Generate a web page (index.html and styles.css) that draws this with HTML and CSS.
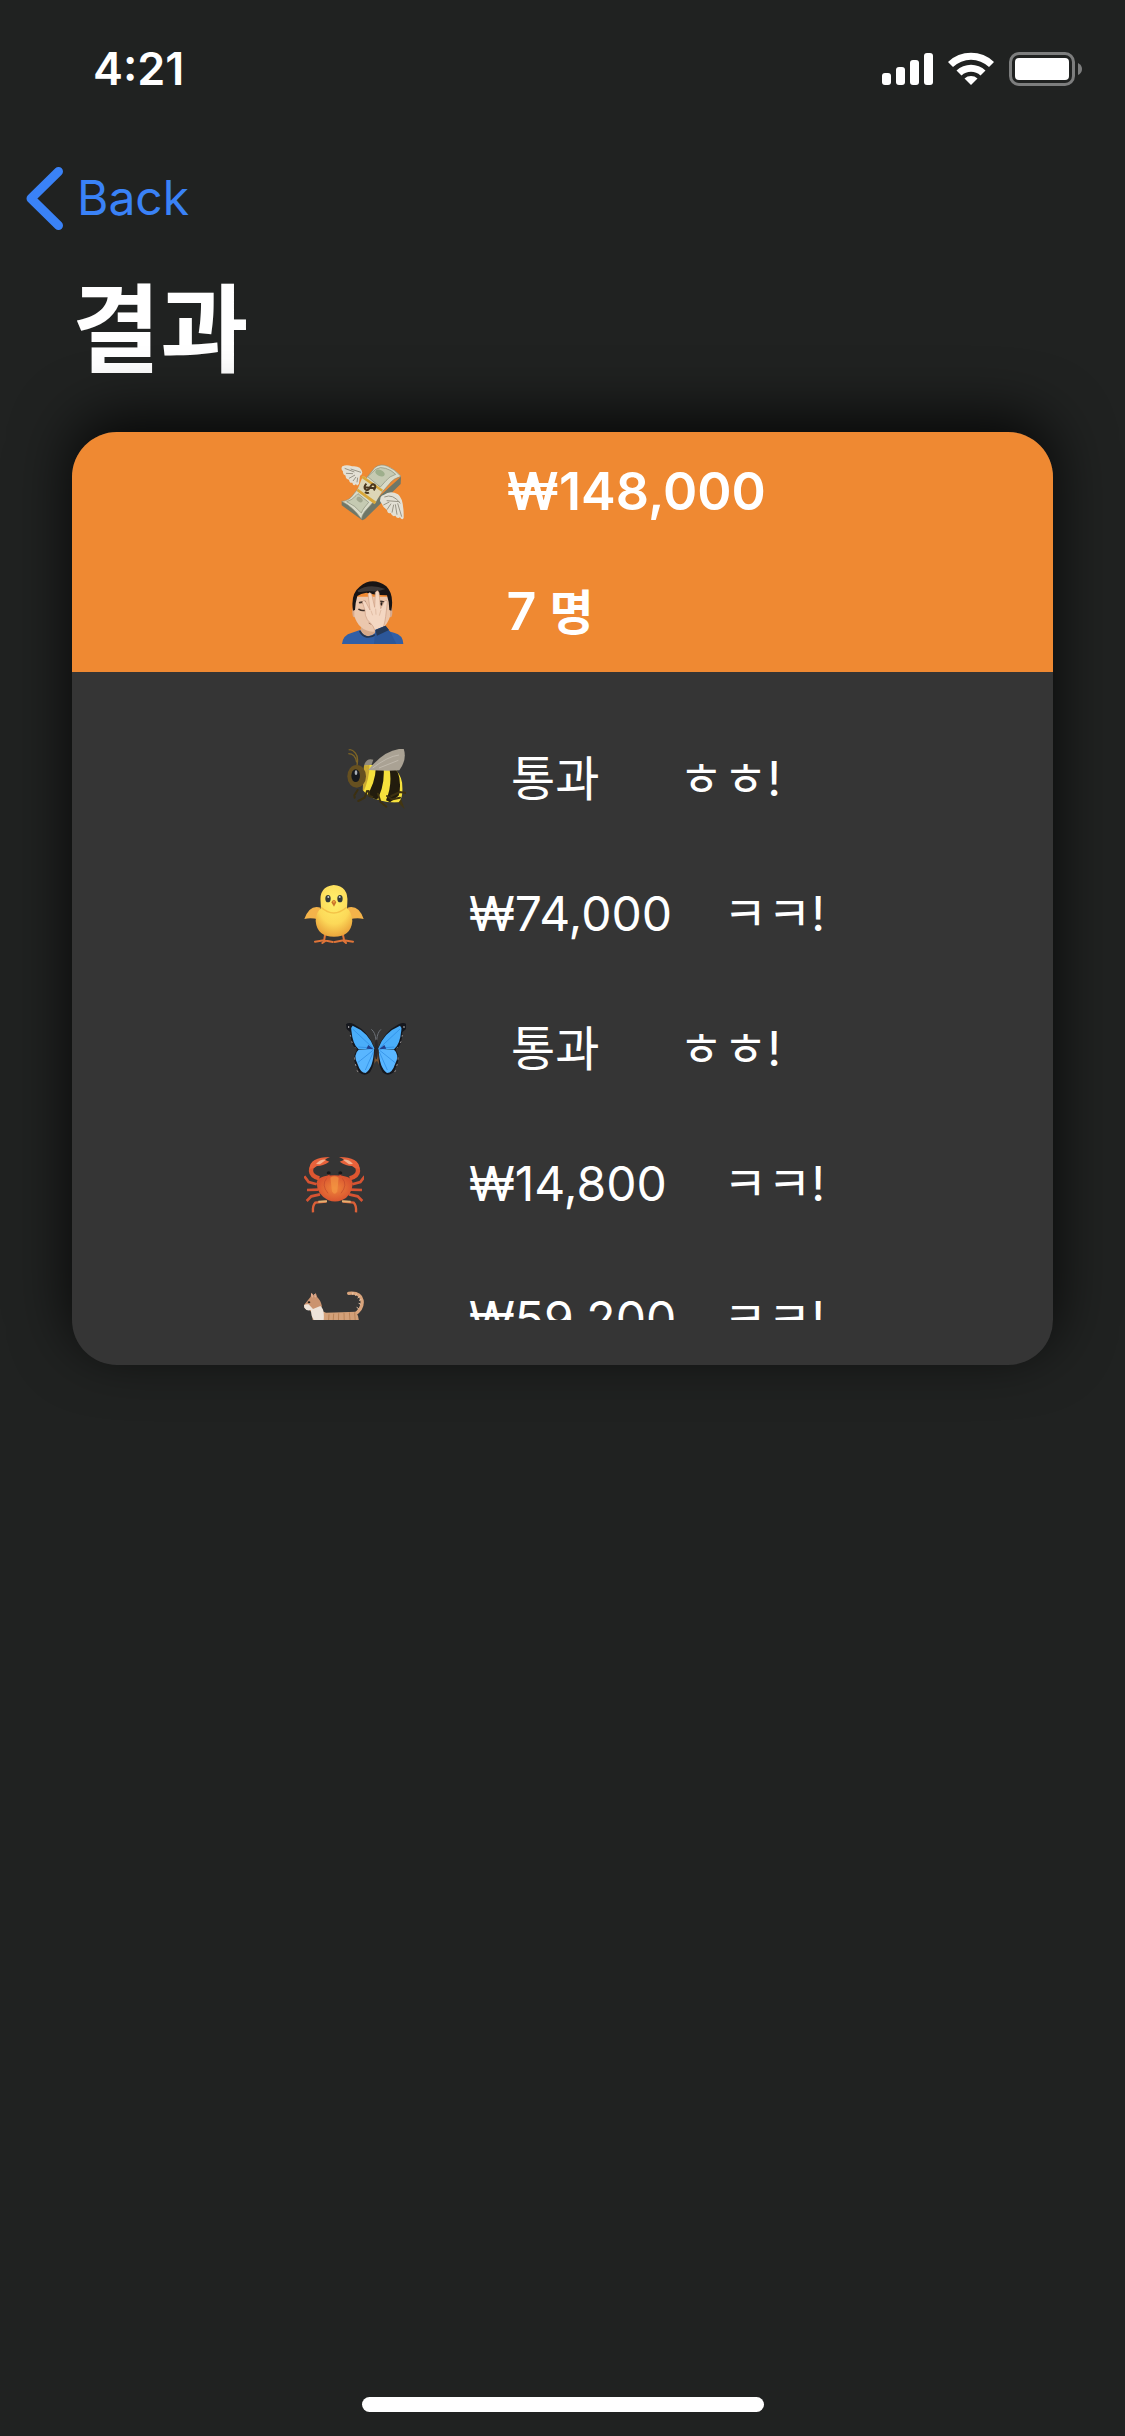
FILE: index.html
```html
<!DOCTYPE html>
<html lang="ko">
<head>
<meta charset="utf-8">
<meta name="viewport" content="width=device-width, initial-scale=1">
<title>결과</title>
<link rel="stylesheet" href="styles.css">
</head>
<body>
<header class="status">
  <time class="clock">4:21</time>
  <svg class="status-icons" viewBox="882 52 200 34" aria-hidden="true">
    <g fill="#fff">
      <rect x="882" y="73" width="9" height="12" rx="3"/>
      <rect x="896" y="67" width="9" height="18" rx="3"/>
      <rect x="910" y="60" width="9" height="25" rx="3"/>
      <rect x="924" y="53" width="9" height="32" rx="3"/>
      <path d="M948 62a33 33 0 0 1 46 0l-5 5a26 26 0 0 0-36 0z"/>
      <path d="M956.500 70.500a21 21 0 0 1 29 0l-5 5a14 14 0 0 0-19 0z"/>
      <path d="M964.500 78.500a10 10 0 0 1 13 0l-6.500 6.500z"/>
      <rect x="1015" y="58" width="54" height="22" rx="4"/>
    </g>
    <rect x="1010.500" y="53.500" width="63" height="31" rx="8.500" fill="none" stroke="#7d7e7e" stroke-width="3"/>
    <path d="M1078 63q4 2 4 6t-4 6z" fill="#7d7e7e"/>
  </svg>
</header>
<nav class="nav">
  <a class="back" href="#">
    <svg class="chevron" viewBox="0 0 37 63" aria-hidden="true"><path d="M32.500 4.500 5 31.500l27.500 27" fill="none" stroke="currentColor" stroke-width="9" stroke-linecap="round" stroke-linejoin="round"/></svg>
    <span>Back</span>
  </a>
</nav>
<main class="page">
  <h1 class="title">결과</h1>
  <section class="card">
    <div class="summary">
      <div class="summary-row">
        <svg class="emoji-lg" viewBox="63 60 192 192" role="img" aria-label="총액">
          <path d="M65 184v12l62 45 8-4 107-105 1-22-118 107z" fill="#6f7768"/>
          <path d="M65 184q22 0 38-24L164 83q17-14 39-4 19 7 40 30-24 6-36 24l-73 82q-11 14-9 23-25-37-60-54z" fill="#d9dbc9" stroke="#8c907d" stroke-width="2"/>
          <path d="M80 185q17-5 28-18l6-6 32 26-14 17q-5 7-8 15-19-23-44-34zM143 110l24-22q13-9 30-3 17 5 30 18-19 6-29 19l-17 19z" fill="#c5cab2" stroke="#898e78" stroke-width="2"/>
          <ellipse cx="180" cy="99" rx="15" ry="9" fill="#9eaf8c" transform="rotate(24 180 99)"/>
          <ellipse cx="119" cy="179" rx="10" ry="7" fill="#a1a78e" transform="rotate(35 119 179)"/>
          <path d="m129 107 60 42-25 43-53-40z" fill="#ddd7b7"/>
          <path d="m129 107 60 42-4 6-61-42zM114 146l55 39-5 8-54-40z" fill="#d9a83a"/>
          <path d="M139 131q-9 10-3 17 6 6 12-3l5-8q5-8 11-2 5 6-3 16M135 156q6 5 12 2M132 142l34 3" fill="none" stroke="#49371e" stroke-width="6"/>
          <path d="M67 79q13-6 29 0 27-3 31 19-2 8-7 9l-3 24q-6 10-9 1-8 9-11-4-9 2-10-9-11-3-10-12-10-4-8-13-8-7-2-15z" fill="#e3e0d5"/>
          <path d="m74 85 29 11m-25 4 21 1m-12 14 18-10m-6 18 9-12m3 16 2-14M92 87l31 10" stroke="#989486" stroke-width="3" fill="none"/>
          <path d="M181 178q-1-10 10-13 20-15 43-2 18 13 17 71-5 8-11-2-9 5-14-5-9 5-14-8-9 4-11-9-13-9-17-21-6-6-3-11z" fill="#e3e0d5"/>
          <path d="m190 195 18-9m-7 23 12-18m3 27 5-24m10 30-5-31m19 37-12-40M193 171q26-11 48 19m-41-8 38 3" stroke="#989486" stroke-width="3" fill="none"/>
        </svg>
        <strong>₩148,000</strong>
      </div>
      <div class="summary-row">
        <svg class="emoji-lg" viewBox="63 420 192 192" role="img" aria-label="인원">
          <path d="M66 612q2-27 30-34l24-8h72l30 8q27 6 28 34z" fill="#315fa6"/>
          <path d="M121 571q18 34 51 2l-2-21-43-1z" fill="#d5a98a"/>
          <path d="M119 573q17 30 50 10" fill="none" stroke="#26364f" stroke-width="5"/>
          <ellipse cx="103" cy="517" rx="6" ry="15" fill="#d7ab90"/><ellipse cx="211" cy="517" rx="6" ry="15" fill="#d7ab90"/>
          <path d="M103 470h107v60q-15 43-52 45-42-3-55-47z" fill="#ebc7ad"/>
          <path d="M99 512q-8-50 20-72 38-32 80-1 24 24 15 73l-6-2q0-24-7-44-42-2-62-8-17 3-27 10-6 20-7 42z" fill="#171415"/>
          <path d="M112 452q35-24 84-5-24 10-48 6l-32 4z" fill="#3d3837"/>
          <path d="m119 488 16-3m47-1 12 2M117 508q8 5 17 3" stroke="#3f3029" stroke-width="5" stroke-linecap="round" fill="none"/>
          <ellipse cx="184" cy="492" rx="4" ry="5" fill="#271e1b"/><ellipse cx="130" cy="487" rx="4" ry="4" fill="#271e1b"/>
          <path d="M146 549q6 5 11 2" stroke="#a37965" stroke-width="3" fill="none"/>
          <path d="M167 577q-4-19-25-38-8-12-7-28l-8-25q3-9 10-1l13 25-6-48q4-8 11 0l9 40 2-45q6-9 11 0l5 49 11-22q9-7 9 3l-5 43q-2 17-7 32z" fill="#f4d7c2" stroke="#cda086" stroke-width="2"/>
          <path d="m153 512 5 14m9-20 1 18m15-14-5 17" stroke="#d7af96" stroke-width="2"/>
          <path d="m166 569 30-12q8 9 17 22l16 33h-67z" fill="#2c5799"/>
          <path d="m166 570 31-13 10 13-36 17z" fill="#253957"/>
        </svg>
        <strong>7 <span class="kr">명</span></strong>
      </div>
    </div>
    <ul class="results">
      <li class="row pass">
        <svg class="emoji" viewBox="172 86 180 180" role="img" aria-label="벌">
          <defs><clipPath id="bee-body"><path d="M226 136q50-10 96 14 20 20 20 56 0 26-12 40-30 2-52-5-35-5-56-32z"/></clipPath></defs>
          <path d="M226 136q6-24 28-18l-7 20z" fill="#8e897e"/>
          <path d="m331 220 17 46-24-24z" fill="#433610"/>
          <g clip-path="url(#bee-body)">
            <path d="M215 120h140v140H215z" fill="#f6e13c"/>
            <path d="M215 120h27q4 50-20 100h-7z" fill="#c9a832"/>
            <path d="m262 138 23 4q4 60-25 106l-28-18q28-40 30-92zM302 142l24 8q14 40 4 76l-26 20-12-6q20-48 10-98z" fill="#221c0d"/>
          </g>
          <path d="M239 149q50-64 106-64 11 32-13 65-34 3-93-1z" fill="#aaa294"/>
          <path d="M252 143q46-35 79-39m-60 39 58-23" stroke="#c0b9ad" stroke-width="3" fill="none"/>
          <ellipse cx="204" cy="168" rx="28" ry="34" fill="#665020"/>
          <ellipse cx="201" cy="166" rx="13" ry="19" fill="#16191d"/><ellipse cx="202" cy="157" rx="4" ry="7" fill="#a9b0b8"/>
          <path d="M205 134q5-25-5-36-11-13-20-9m24 37q-4-26-25-26" stroke="#7d6425" stroke-width="4" fill="none"/>
          <path d="M207 209l-10 16 1 7m37-20-7 20-19 10m31-30 2 15 9 3m17-10 7 24 18 15m2-32 15 10 24-5m-26-5 25-12 19 3" stroke="#3c3010" stroke-width="6" fill="none" stroke-linecap="round"/>
        </svg>
        <span class="amount kr">통과</span><span class="kr">ㅎㅎ!</span>
      </li>
      <li class="row pay">
        <svg class="emoji" viewBox="44 491 180 180" role="img" aria-label="병아리">
          <defs><radialGradient id="chick" cx=".5" cy=".3" r=".7"><stop offset="0" stop-color="#fff06b"/><stop offset=".65" stop-color="#fcd858"/><stop offset="1" stop-color="#eba63c"/></radialGradient></defs>
          <path d="M94 562q-33-11-49 34 20-5 41 1zM174 562q34-10 49 34-20-5-41 1z" fill="#f4b34a"/>
          <path d="m107 644-3 19m57-19 4 19M77 664l27-4 26 5m-22-3-9 6m37-3 27-5 28 4m-28-2 7 6" stroke="#df7438" stroke-width="6" stroke-linecap="round" fill="none"/>
          <path d="M94 548q-6-49 39-54 45 4 41 53l-1 16q15 13 16 39-4 47-55 47t-55-47q1-27 16-38z" fill="url(#chick)"/>
          <path d="M95 561q38 34 77 0" stroke="#edae37" stroke-width="4" fill="none" opacity=".6"/>
          <ellipse cx="116" cy="535" rx="8" ry="11" fill="#343a38"/><ellipse cx="152" cy="535" rx="8" ry="11" fill="#343a38"/>
          <circle cx="117" cy="530" r="3" fill="#c6cbc7"/><circle cx="151" cy="530" r="3" fill="#c6cbc7"/>
          <path d="M126 546q8-15 15 0l-7 13z" fill="#c9742a"/><path d="M130 544q4-7 7 0l-3 5z" fill="#eda43e"/>
        </svg>
        <span class="amount">₩74,000</span><span class="kr">ㅋㅋ!</span>
      </li>
      <li class="row pass">
        <svg class="emoji" viewBox="170 56 180 180" role="img" aria-label="나비">
          <defs><g id="wing">
            <path d="M258 148q-19-54-64-76-15-8-24 0l2 14 11 10q2 43 20 52-16 24-2 48l8 20q18 14 33 0 16-27 16-68z" fill="#15171d"/>
            <path d="M256 146q-17-50-66-70-6 5-4 14 4 44 22 57l44 3z" fill="#4aaefa"/>
            <path d="M254 148h-46q-18 14-3 44 8 26 24 26 23-16 25-70z" fill="#59b6ff"/>
            <path d="m251 143-61-57m58 57-41-3m44 10-46 37m47-32-24 54" stroke="#2987df" stroke-width="2"/>
            <path d="m253 147-16-13-6 11z" fill="#23418d"/>
            <circle cx="178" cy="80" r="2" fill="#eee"/><path d="m183 104 1 5m3 14 2 5m8 13 3 3m-4 27 0 7m2 13 2 6m3 13 3 5" stroke="#bfb3b2" stroke-width="2"/>
          </g></defs>
          <use href="#wing"/><use href="#wing" transform="matrix(-1 0 0 1 522 0)"/>
          <path d="M260 120q-2-24-14-33m16 33q2-24 13-33" fill="none" stroke="#6c7076" stroke-width="3"/>
          <path d="m257 143-2 48 5-8h4l5 11-3-50z" fill="#785333"/><ellipse cx="261" cy="147" rx="5" ry="30" fill="#29272a"/>
        </svg>
        <span class="amount kr">통과</span><span class="kr">ㅎㅎ!</span>
      </li>
      <li class="row pay">
        <svg class="emoji" viewBox="44 461 180 180" role="img" aria-label="게">
          <defs><radialGradient id="crab"><stop offset="0" stop-color="#ef853a"/><stop offset="1" stop-color="#d9542f"/></radialGradient><g id="claw">
            <path d="M90 534q-24-6-25-22 0-16 15-25" stroke="#dd5630" stroke-width="13" fill="none"/>
            <path d="M61 505q0-35 61-35-8 4-16 8l14 6q-22 14-37 13-11 10-22 8z" fill="#e8623b"/>
            <path d="M80 491q13-15 30-13l-18 14z" fill="#f2b391"/>
            <path d="m45 528 13 17 24 7m-29 17 34-1m-35 34 14-14 26-6" stroke="#d65332" stroke-width="8" fill="none"/>
            <path d="M71 636q-2-20 7-29l33-3" stroke="#dc6038" stroke-width="7" fill="none"/>
            <path d="m87 604 26-1" stroke="#e3b071" stroke-width="6"/>
            <path d="M118 530v-12" stroke="#bc472d" stroke-width="6"/><ellipse cx="118" cy="518" rx="6" ry="5" fill="#17191b"/>
          </g></defs>
          <use href="#claw"/><use href="#claw" transform="matrix(-1 0 0 1 271 0)"/>
          <path d="M82 549q0-23 53-24 55 0 55 25-2 36-33 50-20 7-40 0-34-17-35-51z" fill="url(#crab)"/>
          <path d="M123 532q12-8 25 0l-4 41q-8 15-16 0z" fill="#f59843" opacity=".65"/>
          <path d="M112 534q-17 19 4 45m43-45q17 19-4 45" fill="none" stroke="#bd442b" stroke-width="3" opacity=".6"/>
        </svg>
        <span class="amount">₩14,800</span><span class="kr">ㅋㅋ!</span>
      </li>
      <li class="row pay">
        <svg class="emoji" viewBox="44 866 180 180" role="img" aria-label="고양이">
          <path d="M178 879q35-4 40 21 4 25-23 43" fill="none" stroke="#d9a47c" stroke-width="10" stroke-linecap="round"/>
          <path d="m191 876-1 7m12-3-4 6m13 2-6 5m11 5-7 2m6 12-7-3m0 16-6-4" stroke="#edcdb0" stroke-width="3"/>
          <path d="M84 917q8 14 26 20 50-2 89-3 14 18 8 51l-4 52h-16l-5-45-65-2-8 47H94l-4-47q-25-19-23-66z" fill="#d3a078"/>
          <path d="m64 889 2-12 9 9 4-9 5 14q10 9 14 27-7 14-26 19-8-1-12-9-13 3-17-13z" fill="#cb936f"/>
          <path d="M44 915q5-5 14-3l13 14 22-9q13 8 10 43-5 28-13 15-27-20-25-46-12 5-20-7z" fill="#eee3d9"/>
          <path d="m67 880 2 11m7-10 2 10" stroke="#f2bea5" stroke-width="3"/><ellipse cx="59" cy="906" rx="4" ry="3" fill="#282422"/>
          <path d="m119 942-2 34m16-36-2 31m17-32-1 35m17-36 1 31m15-33 3 36m13-36 2 30" stroke="#b98358" stroke-width="3"/>
        </svg>
        <span class="amount">₩59,200</span><span class="kr">ㅋㅋ!</span>
      </li>
    </ul>
  </section>
</main>
<footer class="home"><div class="home-bar"></div></footer>
</body>
</html>
```
FILE: styles.css
```css
* {
  box-sizing: border-box;
}

body {
  margin: 0;
  min-height: 100vh;
  display: flex;
  flex-direction: column;
  background: #202221;
  color: #fff;
  font-family: Inter, "Noto Sans CJK KR", sans-serif;
  font-size: 48px;
  line-height: 60px;
}

.status {
  display: flex;
  align-items: center;
  justify-content: space-between;
  height: 132px;
  padding: 6px 43px 0 93px;
}

.clock {
  font-size: 45px;
  font-weight: 600;
}

.status-icons {
  width: 200px;
  height: 34px;
}

.nav {
  display: flex;
  align-items: center;
  height: 132px;
  padding: 0 26px;
}

.back {
  display: flex;
  align-items: center;
  gap: 14px;
  color: #3a82f7;
  text-decoration: none;
}

.chevron {
  width: 37px;
  height: 63px;
}

.page {
  padding: 0 72px;
}

.title {
  margin: 0 0 38px;
  font-size: 96px;
  line-height: 130px;
  font-weight: 700;
}

/* isolation keeps the shadow above the heading */
.card {
  isolation: isolate;
  border-radius: 45px;
  background: #353535;
  box-shadow: 0 -15px 60px rgba(0, 0, 0, 0.8);
  padding-bottom: 45px;
}

.summary {
  border-radius: 45px 45px 0 0;
  background: #ef8932;
  font-size: 52px;
}

.summary strong {
  font-weight: 600;
}

.summary-row {
  display: grid;
  grid-template-columns: 166px 278px;
  justify-content: center;
  align-items: center;
  height: 120px;
}

.emoji-lg {
  width: 64px;
  height: 64px;
}

.results {
  display: flex;
  flex-direction: column;
  gap: 12px;
  max-height: 603px;
  margin: 45px 0 0;
  padding: 0;
  list-style: none;
  overflow: hidden;
}

.row {
  display: grid;
  flex: none;
  justify-content: center;
  align-items: center;
  height: 123px;
  white-space: nowrap;
}

.pass {
  grid-template-columns: 165px 168px 100px;
}

.pay {
  grid-template-columns: 165px 254px 98px;
}

.emoji {
  width: 60px;
  height: 60px;
}

.kr {
  font-size: 48px;
}

.home {
  display: flex;
  justify-content: center;
  margin-top: auto;
  padding-bottom: 24px;
}

.home-bar {
  width: 402px;
  height: 15px;
  border-radius: 8px;
  background: #fff;
}
```
